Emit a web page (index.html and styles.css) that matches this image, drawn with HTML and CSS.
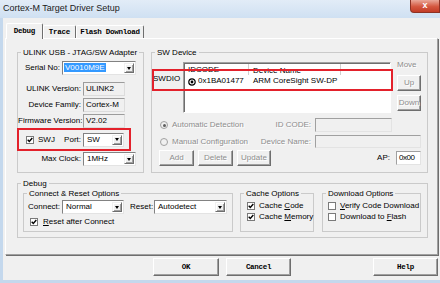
FILE: index.html
```html
<!DOCTYPE html>
<html lang="en">
<head>
  <meta charset="UTF-8">
  <title>Cortex-M Target Driver Setup</title>
  <link rel="stylesheet" href="styles.css">
</head>
<body>
  <div class="window">
    <div class="titlebar">
      <span class="caption">Cortex-M Target Driver Setup</span>
      <span class="close">x</span>
    </div>

    <div class="client">
      <div class="tabs">
        <span class="tab active tab-debug">Debug</span>
        <span class="tab tab-trace">Trace</span>
        <span class="tab tab-flash">Flash Download</span>
      </div>

      <div class="panel">
        <div class="top-row">
          <!-- Adapter -->
          <fieldset class="group ulink">
            <legend>ULINK USB - JTAG/SW Adapter</legend>
            <div class="row serial">
              <label>Serial No:</label>
              <div class="combo w-serial"><span class="val"><span class="sel">V0010M9E</span></span><span class="arrow"></span></div>
            </div>
            <div class="row info first">
              <label>ULINK Version:</label>
              <span class="field">ULINK2</span>
            </div>
            <div class="row info">
              <label>Device Family:</label>
              <span class="field">Cortex-M</span>
            </div>
            <div class="row info">
              <label>Firmware Version:</label>
              <span class="field">V2.02</span>
            </div>
            <div class="row swj">
              <span class="check"><svg viewBox="0 0 6 6"><path d="M0.7 2.7 L2.3 4.4 L5.3 1"/></svg></span>
              <span class="swj-text">SWJ</span>
              <label class="port-label">Port:</label>
              <div class="combo w-port"><span class="val">SW</span><span class="arrow"></span></div>
            </div>
            <div class="row info clock">
              <label>Max Clock:</label>
              <div class="combo w-clock"><span class="val">1MHz</span><span class="arrow"></span></div>
            </div>
          </fieldset>

          <!-- SW Device -->
          <fieldset class="group swdev">
            <legend>SW Device</legend>
            <div class="sw-top">
              <span class="sw-label">SWDIO</span>
              <div class="list">
                <div class="list-head">
                  <span class="col-id">IDCODE</span>
                  <span class="col-name">Device Name</span>
                  <span class="col-rest"></span>
                </div>
                <div class="list-row">
                  <span class="col-id">
                    <svg class="target" viewBox="0 0 8 8"><circle cx="4" cy="4" r="3.2" fill="none" stroke="#000" stroke-width="1.2"/><circle cx="4" cy="4" r="1.4"/></svg>0x1BA01477
                  </span>
                  <span class="col-name">ARM CoreSight SW-DP</span>
                </div>
              </div>
              <div class="move">
                <span class="dim">Move</span>
                <button class="btn up" disabled>Up</button>
                <button class="btn down" disabled>Down</button>
              </div>
              <div class="mark"></div>
            </div>

            <div class="sw-opt opt-auto">
              <span class="radio on"></span>
              <span class="dim opt-text">Automatic Detection</span>
              <label class="dim">ID CODE:</label>
              <span class="tb w-id"></span>
            </div>
            <div class="sw-opt opt-manual">
              <span class="radio"></span>
              <span class="dim opt-text">Manual Configuration</span>
              <label class="dim">Device Name:</label>
              <span class="tb w-name"></span>
            </div>
            <div class="sw-btns">
              <button class="btn w-add" disabled>Add</button>
              <button class="btn w-del" disabled>Delete</button>
              <button class="btn w-upd" disabled>Update</button>
              <label class="ap-label">AP:</label>
              <span class="tb live w-ap">0x00</span>
            </div>
          </fieldset>
        </div>

        <!-- Debug -->
        <fieldset class="group debug">
          <legend>Debug</legend>
          <div class="debug-row">
            <fieldset class="group connect">
              <legend>Connect &amp; Reset Options</legend>
              <div class="conn-row">
                <label class="conn-label">Connect:</label>
                <div class="combo w-conn"><span class="val">Normal</span><span class="arrow"></span></div>
                <label class="reset-label">Reset:</label>
                <div class="combo w-reset"><span class="val">Autodetect</span><span class="arrow"></span></div>
              </div>
              <div class="chk-row">
                <span class="check"><svg viewBox="0 0 6 6"><path d="M0.7 2.7 L2.3 4.4 L5.3 1"/></svg></span>
                <span class="chk-text"><u>R</u>eset after Connect</span>
              </div>
            </fieldset>

            <fieldset class="group cache">
              <legend>Cache Options</legend>
              <div class="chk-row">
                <span class="check"><svg viewBox="0 0 6 6"><path d="M0.7 2.7 L2.3 4.4 L5.3 1"/></svg></span>
                <span class="chk-text">Cache <u>C</u>ode</span>
              </div>
              <div class="chk-row">
                <span class="check"><svg viewBox="0 0 6 6"><path d="M0.7 2.7 L2.3 4.4 L5.3 1"/></svg></span>
                <span class="chk-text">Cache <u>M</u>emory</span>
              </div>
            </fieldset>

            <fieldset class="group download">
              <legend>Download Options</legend>
              <div class="chk-row">
                <span class="check"></span>
                <span class="chk-text"><u>V</u>erify Code Download</span>
              </div>
              <div class="chk-row">
                <span class="check"></span>
                <span class="chk-text">Download to <u>F</u>lash</span>
              </div>
            </fieldset>
          </div>
        </fieldset>
      </div>

      <div class="actions">
        <button class="btn mono w-ok">OK</button>
        <button class="btn mono w-cancel">Cancel</button>
        <button class="btn mono w-help">Help</button>
      </div>
    </div>
  </div>
</body>
</html>
```

FILE: styles.css
```css
* {
  box-sizing: border-box;
}

body {
  margin: 0;
  font-family: "Liberation Sans", Arial, sans-serif;
  font-size: 8px;
  line-height: 10px;
  color: #000;
  background: #c4d8ed;
  overflow: hidden;
}

.window {
  width: 440px;
  height: 283px;
  display: flex;
  flex-direction: column;
}

/* Title bar */
.titlebar {
  height: 18px;
  flex: none;
  display: flex;
  justify-content: space-between;
  background: linear-gradient(#e2ecf7, #cfe0f2);
}

.caption {
  padding-left: 3px;
  font-size: 9px;
  line-height: 17px;
  color: #1b1b1b;
}

.close {
  width: 30px;
  height: 13px;
  border: 1px solid #8d3224;
  border-top: 0;
  border-radius: 0 0 0 4px;
  background: linear-gradient(#eaa899, #d4573f 55%, #c23c27);
  color: #fff;
  font-size: 9px;
  font-weight: bold;
  line-height: 11px;
  text-align: center;
}

.client {
  flex: 1;
  margin: 0 0 3px 3px;
  padding: 5px 2px 0 2px;
  background: #f0f0f0;
}

/* Tabs */
.tabs {
  position: relative;
  z-index: 1;
  display: flex;
  align-items: flex-end;
  height: 16px;
  margin: 0 0 -1px 1px;
}

.tab {
  height: 13px;
  margin-bottom: 1px;
  border: 1px solid;
  border-bottom: 0;
  border-color: #fff #6e6e6e #fff #fff;
  border-radius: 2px 2px 0 0;
  font: bold 7.5px/12px "Liberation Mono", "Courier New", monospace;
  letter-spacing: -0.25px;
  text-align: center;
}

.tab.active {
  height: 16px;
  margin-bottom: 0;
  background: #f0f0f0;
  line-height: 14px;
}

.tab-debug { width: 37px; }
.tab-trace { width: 33px; }
.tab-flash { width: 68px; }

.panel {
  width: 433px;
  height: 217px;
  border: 1px solid;
  border-color: #fff #a0a0a0 #a0a0a0 #fff;
  box-shadow: 1px 1px 0 #6e6e6e;
  padding: 8px 0 0 11px;
  display: flex;
  flex-direction: column;
}

/* Group boxes */
.group {
  margin: 0;
  padding: 0;
  min-width: 0;
  border: 1px solid #cacaca;
}

.group legend {
  margin-left: 3px;
  padding: 0 2px;
  line-height: 11px;
}

.top-row {
  display: flex;
  gap: 7px;
  height: 126px;
}

.ulink { width: 127px; }
.swdev { width: 277px; }

.row {
  display: flex;
  align-items: center;
  height: 14px;
}

.row label {
  text-align: right;
  padding-right: 2px;
  white-space: nowrap;
}

.serial { margin-top: 3px; }
.serial label { width: 44px; }

.info { margin-top: 2px; }
.info.first { margin-top: 7px; }
.info.clock { margin-top: 1px; }
.info label { width: 65px; }

.field {
  width: 42px;
  height: 14px;
  padding-left: 2px;
  border: 1px solid;
  border-color: #9c9c9c #dcdcdc #dcdcdc #9c9c9c;
  background: #f0f0f0;
  line-height: 12px;
}

.swj {
  width: 114px;
  height: 23px;
  margin-left: -1px;
  padding-left: 7px;
  border: 2px solid #e3212b;
}

.swj-text {
  width: 12px;
  margin-left: 4px;
}

.swj .port-label { width: 33px; }

/* Combo box */
.combo {
  display: flex;
  align-items: center;
  height: 14px;
  padding: 1px;
  background: #fff;
  border: 1px solid;
  border-color: #828282 #e3e3e3 #e3e3e3 #828282;
}

.combo .val {
  flex: 1;
  padding-left: 2px;
  white-space: nowrap;
  overflow: hidden;
}

.w-serial .val { padding-left: 0; }

.combo .sel {
  padding: 0 1px;
  background: #3399ff;
  color: #fff;
}

.arrow {
  width: 10px;
  align-self: stretch;
  display: flex;
  align-items: center;
  justify-content: center;
  background: #f0f0f0;
  border: 1px solid;
  border-color: #f0f0f0 #6e6e6e #6e6e6e #f0f0f0;
  box-shadow: inset 1px 1px 0 #fff, inset -1px -1px 0 #a0a0a0;
}

.arrow::after {
  content: "";
  border-left: 2.5px solid transparent;
  border-right: 2.5px solid transparent;
  border-top: 3px solid #000;
}

.w-serial { width: 74px; }
.w-port { width: 41px; }
.w-clock { width: 53px; }
.w-conn { width: 62px; }
.w-reset { width: 73px; }

/* Check and radio */
.check {
  flex: none;
  width: 8px;
  height: 8px;
  border: 1px solid #7a7a7a;
  background: #fff;
}

.check svg {
  display: block;
  width: 6px;
  height: 6px;
  fill: none;
  stroke: #000;
  stroke-width: 1.4;
}

.radio {
  flex: none;
  width: 8px;
  height: 8px;
  margin-right: 4px;
  border-radius: 50%;
  border: 1px solid #a0a0a0;
  background: #f0f0f0;
  display: flex;
  align-items: center;
  justify-content: center;
}

.radio.on::after {
  content: "";
  width: 3px;
  height: 3px;
  border-radius: 50%;
  background: #5e5e5e;
}

.dim,
.btn:disabled {
  color: #8d8d8d;
  text-shadow: 1px 1px 0 #fff;
}

/* SW device list */
.sw-top {
  position: relative;
  display: flex;
  height: 51px;
  margin-top: 4px;
}

.sw-label {
  width: 31px;
  padding: 12px 0 0 1px;
}

.list {
  width: 208px;
  padding-left: 1px;
  background: #fff;
  border: 1px solid;
  border-color: #a0a0a0 #fff #fff #a0a0a0;
  box-shadow: inset 1px 1px 0 #6e6e6e;
}

.list-head,
.list-row {
  display: flex;
}

.list-head {
  height: 11px;
  line-height: 14px;
  margin-top: 1px;
  overflow: hidden;
}

.list-row {
  height: 12px;
  align-items: center;
}

.col-id {
  width: 64px;
  padding-left: 3px;
  display: flex;
  align-items: center;
  border-right: 1px solid transparent;
}

.col-name {
  width: 92px;
  padding-left: 4px;
  white-space: nowrap;
  border-right: 1px solid transparent;
}

.list-head .col-id,
.list-head .col-name {
  border-right-color: #cfcfcf;
}

.target {
  width: 8px;
  height: 8px;
  margin-right: 2px;
  margin-top: 2px;
}

.move {
  width: 24px;
  margin: -2px 0 0 6px;
  display: flex;
  flex-direction: column;
}

.move .dim { line-height: 10px; }
.move .up { margin-top: 5px; height: 16px; }
.move .down { margin-top: 4px; height: 16px; }

.mark {
  position: absolute;
  left: 0;
  top: 7px;
  width: 241px;
  height: 22px;
  border: 2px solid #e3212b;
}

.sw-opt {
  display: flex;
  align-items: center;
  height: 14px;
  padding-left: 8px;
}

.opt-auto { margin-top: 5px; padding-right: 35px; }
.opt-manual { margin-top: 3px; height: 13px; padding-right: 6px; }

.opt-text { white-space: nowrap; }

.sw-opt label {
  flex: 1;
  text-align: right;
  padding-right: 4px;
  white-space: nowrap;
}

.tb {
  height: 100%;
  padding-left: 2px;
  border: 1px solid;
  border-color: #a0a0a0 #e3e3e3 #e3e3e3 #a0a0a0;
  background: #f0f0f0;
  line-height: 12px;
}

.tb.live { background: #fff; }

.w-id { width: 77px; }
.w-name { width: 106px; }

.w-ap {
  width: 25px;
  height: 14px;
  letter-spacing: -0.5px;
}

.sw-btns {
  display: flex;
  align-items: center;
  height: 16px;
  margin-top: 2px;
  padding: 0 6px 0 7px;
}

.ap-label {
  margin-left: auto;
  padding-right: 6px;
}

/* Buttons */
.btn {
  margin: 0;
  padding: 0;
  font: inherit;
  color: #000;
  background: #f0f0f0;
  border: 1px solid;
  border-color: #fff #6e6e6e #6e6e6e #fff;
  box-shadow: inset -1px -1px 0 #a0a0a0;
}

.w-add { width: 35px; height: 16px; }
.w-del { width: 35px; height: 16px; margin-left: 4px; }
.w-upd { width: 34px; height: 16px; margin-left: 4px; }

/* Debug box */
.debug {
  height: 60px;
  margin-top: 5px;
  width: 411px;
}

.debug-row {
  display: flex;
  margin: -1px 0 0 5px;
}

.connect { width: 210px; height: 44px; }
.cache { width: 74px; height: 44px; margin-left: 7px; }
.download { width: 99px; height: 44px; margin-left: 8px; }

.conn-row {
  display: flex;
  align-items: center;
  height: 14px;
  margin-top: 1px;
  padding-left: 4px;
}

.conn-label { width: 34px; }

.reset-label {
  width: 24px;
  margin-left: 6px;
}

.chk-row {
  display: flex;
  align-items: center;
  height: 11px;
  padding-left: 6px;
  white-space: nowrap;
}

.chk-text { margin-left: 4px; }

.connect .chk-row { margin-top: 2px; }
.connect .chk-text { margin-left: 5px; }
.cache .chk-row:first-of-type,
.download .chk-row:first-of-type { margin-top: 1px; }
.download .chk-row { padding-left: 5px; }

/* Dialog buttons */
.actions {
  display: flex;
  margin-top: 3px;
  padding-left: 148px;
}

.btn.mono {
  height: 18px;
  font: bold 7.5px/16px "Liberation Mono", "Courier New", monospace;
  letter-spacing: -0.3px;
}

.w-ok { width: 66px; }
.w-cancel { width: 65px; margin-left: 7px; }
.w-help { width: 65px; margin-left: 82px; }
```
